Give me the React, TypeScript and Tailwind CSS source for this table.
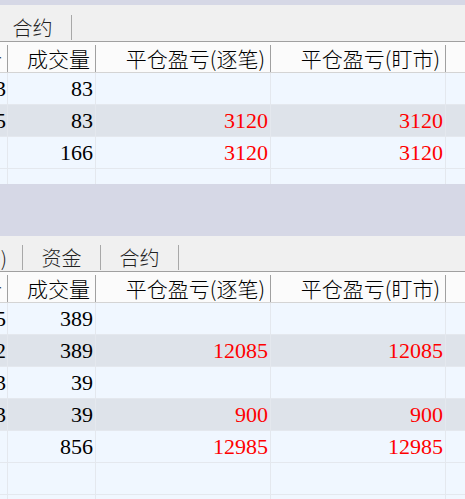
import React from "react";

type Row = { pre: string; vol: string; close: string; mark: string; alt: boolean };

const CJK = { fontFamily: '"Noto Sans CJK SC", sans-serif' };
const NUM = { fontFamily: '"Liberation Serif", "Noto Sans CJK SC", serif' };

const topRows: Row[] = [
  { pre: "4503", vol: "83", close: "", mark: "", alt: false },
  { pre: "4505", vol: "83", close: "3120", mark: "3120", alt: true },
  { pre: "", vol: "166", close: "3120", mark: "3120", alt: false },
  { pre: "", vol: "", close: "", mark: "", alt: false },
];

const bottomRows: Row[] = [
  { pre: "3835", vol: "389", close: "", mark: "", alt: false },
  { pre: "3862", vol: "389", close: "12085", mark: "12085", alt: true },
  { pre: "3853", vol: "39", close: "", mark: "", alt: false },
  { pre: "3873", vol: "39", close: "900", mark: "900", alt: true },
  { pre: "", vol: "856", close: "12985", mark: "12985", alt: false },
  { pre: "", vol: "", close: "", mark: "", alt: false },
  { pre: "", vol: "", close: "", mark: "", alt: false },
];

const cols = "grid grid-cols-[8px_88px_175px_175px_1fr]";

function TabBar({ tabs, first, tall }: { tabs: string[]; first?: string; tall?: boolean }) {
  return (
    <div
      className={`flex items-end bg-[#f0f0f0] pb-[1px] ${tall ? "h-[36px]" : "h-[35px]"}`}
      style={CJK}
    >
      {first !== undefined && (
        <div className="flex h-[25px] w-[23px] shrink-0 items-center justify-end overflow-hidden border-r border-[#a8a8a8] pr-[15px] text-[20px] font-light leading-none text-[#222] whitespace-nowrap">
          {first}
        </div>
      )}
      {tabs.map((t, i) => (
        <div
          key={t}
          className={`flex h-[25px] w-[78px] shrink-0 items-center justify-center border-r border-[#a8a8a8] text-[20px] font-light leading-none text-[#222] ${
            first === undefined && i === 0 ? "-ml-[6px]" : ""
          }`}
        >
          {t}
        </div>
      ))}
    </div>
  );
}

function Header() {
  const heads = ["成交价", "成交量", "平仓盈亏(逐笔)", "平仓盈亏(盯市)", ""];
  return (
    <div className={`${cols} h-[32px] border-y border-t-[#a0a0a0] border-b-[#d4d4d4] bg-[#fbfbfb]`} style={CJK}>
      {heads.map((h, i) => (
        <div
          key={i}
          className={`mt-[3px] flex items-center justify-end whitespace-nowrap pr-[5px] text-[21px] font-light leading-none text-black ${
            i < 4 ? "border-r border-[#a0a0a0]" : ""
          } ${i === 0 ? "overflow-hidden" : ""}`}
        >
          {h}
        </div>
      ))}
    </div>
  );
}

function Body({ rows }: { rows: Row[] }) {
  return (
    <div style={NUM}>
      {rows.map((r, i) => (
        <div
          key={i}
          className={`${cols} h-[32px] border-b border-[#e4e8ee] text-[22px] leading-none ${
            r.alt ? "bg-[#dee3ea]" : "bg-[#f0f7ff]"
          }`}
        >
          <div className="flex items-center justify-end overflow-hidden whitespace-nowrap border-r border-[#e4e8ee] pr-[1px] text-black">
            {r.pre}
          </div>
          <div className="flex items-center justify-end border-r border-[#e4e8ee] pr-[2px] text-black">{r.vol}</div>
          <div className="flex items-center justify-end border-r border-[#e4e8ee] pr-[2px] text-[#ff0000]">{r.close}</div>
          <div className="flex items-center justify-end border-r border-[#e4e8ee] pr-[2px] text-[#ff0000]">{r.mark}</div>
          <div />
        </div>
      ))}
    </div>
  );
}

export default function App() {
  return (
    <div className="h-[499px] w-[465px] overflow-hidden bg-[#d6d8e6]">
      <div className="mt-[5px] h-[179px] overflow-hidden bg-[#f0f7ff]">
        <TabBar tabs={["合约"]} tall />
        <Header />
        <Body rows={topRows} />
      </div>
      <div className="mt-[52px] h-[263px] overflow-hidden bg-[#f0f7ff]">
        <TabBar first="持仓(D)" tabs={["资金", "合约"]} />
        <Header />
        <Body rows={bottomRows} />
      </div>
    </div>
  );
}
